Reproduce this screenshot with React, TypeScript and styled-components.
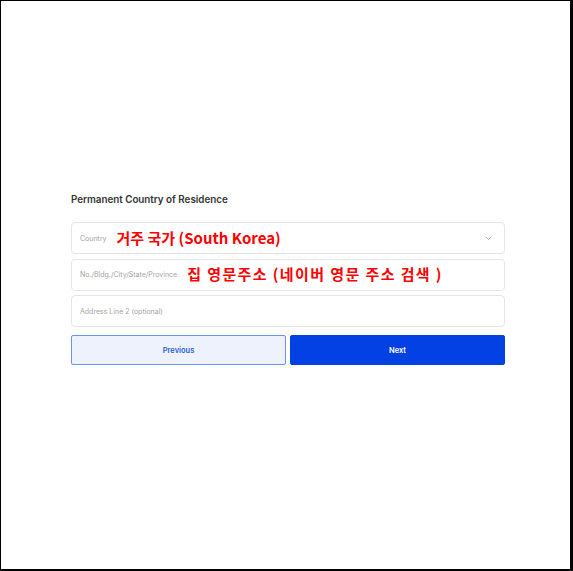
import React from "react";
import styled, { createGlobalStyle } from "styled-components";

const GlobalStyle = createGlobalStyle`
  html, body {
    margin: 0;
    padding: 0;
    background: #fff;
  }
  body {
    font-family: Inter, "Noto Sans", sans-serif;
  }
`;

const Frame = styled.div`
  box-sizing: border-box;
  width: 573px;
  height: 571px;
  border-style: solid;
  border-color: #000;
  border-width: 1px 3px 2px 1px;
  padding: 191px 65px 0 70px;
  background: #fff;
`;

const Form = styled.div`
  display: flex;
  flex-direction: column;
  width: 434px;
`;

const Label = styled.div`
  font-size: 9.8px;
  font-weight: 600;
  color: #333;
  line-height: 16px;
  margin-bottom: 14px;
`;

const Fields = styled.div`
  display: flex;
  flex-direction: column;
  gap: 4.5px;
`;

const Field = styled.div`
  box-sizing: border-box;
  height: 32px;
  border: 1px solid #e6e6e6;
  border-radius: 4px;
  display: flex;
  align-items: center;
  padding: 0 12px 0 8px;
  gap: 10px;
`;

const Placeholder = styled.span`
  font-size: 7px;
  color: #a4a4a4;
  white-space: nowrap;
`;

const Note = styled.span<{ $spread?: number }>`
  font-family: "Noto Sans CJK KR", sans-serif;
  font-size: 15px;
  font-weight: 700;
  color: #ff0000;
  white-space: nowrap;
  line-height: 1;
  margin-top: -2px;
  letter-spacing: ${(p) => p.$spread ?? 0}px;
`;

const Chevron = styled.svg`
  margin-left: auto;
  width: 7px;
  height: 5px;
`;

const Buttons = styled.div`
  display: grid;
  grid-template-columns: 1fr 1fr;
  gap: 4px;
  margin-top: 8px;
`;

const Button = styled.button<{ $primary?: boolean }>`
  box-sizing: border-box;
  height: 30px;
  border-radius: 2px;
  font-family: Inter, sans-serif;
  font-size: 7.5px;
  font-weight: 600;
  cursor: pointer;
  border: 1px solid ${(p) => (p.$primary ? "#0341e4" : "#6b93f2")};
  background: ${(p) => (p.$primary ? "#0341e4" : "#edf2fd")};
  color: ${(p) => (p.$primary ? "#fff" : "#2c5be4")};
`;

export default function App() {
  return (
    <>
      <GlobalStyle />
      <Frame>
        <Form>
          <Label>Permanent Country of Residence</Label>
          <Fields>
            <Field>
              <Placeholder>Country</Placeholder>
              <Note>거주 국가 (South Korea)</Note>
              <Chevron viewBox="0 0 7 5">
                <path d="M1 1l2.5 2.5L6 1" fill="none" stroke="#b5b5b5" strokeWidth="1" />
              </Chevron>
            </Field>
            <Field>
              <Placeholder>No./Bldg./City/State/Province</Placeholder>
              <Note $spread={1.4}>집 영문주소 (네이버 영문 주소 검색 )</Note>
            </Field>
            <Field>
              <Placeholder>Address Line 2 (optional)</Placeholder>
            </Field>
          </Fields>
          <Buttons>
            <Button>Previous</Button>
            <Button $primary>Next</Button>
          </Buttons>
        </Form>
      </Frame>
    </>
  );
}
